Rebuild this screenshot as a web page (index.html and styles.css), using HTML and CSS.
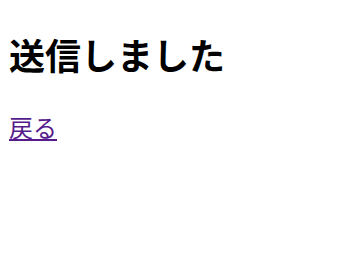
FILE: index.html
```html
<!DOCTYPE html>
<html lang="ja">
<head>
<meta charset="utf-8">
<link rel="stylesheet" href="styles.css">
</head>
<body class="page">
<h1 class="title">送信しました</h1>
<p class="back"><a class="back-link" href="#">戻る</a></p>
</body>
</html>
```
FILE: styles.css
```css
.page {
  margin: 9px;
  font-family: "Noto Sans CJK JP", sans-serif;
  font-size: 24px;
  background: #fff;
  color: #000;
}
.title {
  font-size: 36px;
  font-weight: bold;
  margin: 19px 0 0;
}
.back {
  margin: 29px 0 20px;
}
.back-link {
  color: #551a8b;
  text-decoration: underline;
}
```
